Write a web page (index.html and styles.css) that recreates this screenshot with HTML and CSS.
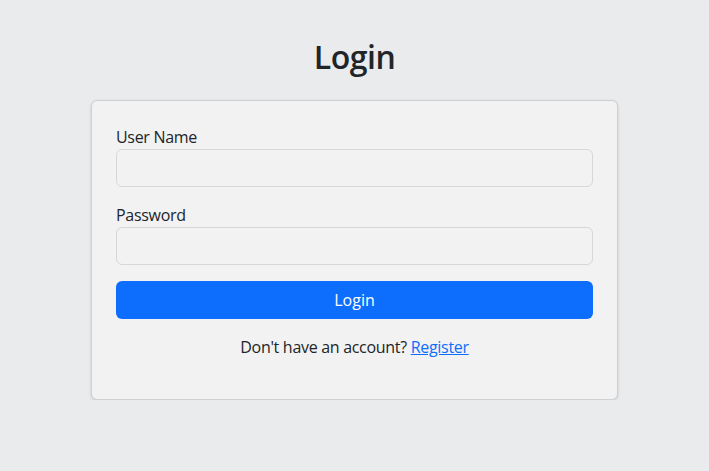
FILE: index.html
```html
<!DOCTYPE html>
<html lang="en">
<head>
<meta charset="utf-8">
<title>Login</title>
<link rel="stylesheet" href="styles.css">
</head>
<body>
<main class="page">
  <h2 class="title">Login</h2>
  <form class="card">
    <div class="field">
      <label class="label" for="user">User Name</label>
      <input class="input" id="user" type="text">
    </div>
    <div class="field">
      <label class="label" for="pass">Password</label>
      <input class="input" id="pass" type="password">
    </div>
    <button class="btn" type="button">Login</button>
    <p class="note">Don't have an account? <a href="#" class="link">Register</a></p>
  </form>
</main>
</body>
</html>
```
FILE: styles.css
```css
* { box-sizing: border-box; }
html, body { margin: 0; }
body {
  background: #eaebed;
  font-family: "Open Sans", "Noto Sans", "Liberation Sans", sans-serif;
  font-size: 16px;
  line-height: 1.5;
  letter-spacing: -0.3px;
  color: #212529;
}
.page {
  display: flex;
  flex-direction: column;
  align-items: center;
  padding-top: 38px;
}
.title {
  margin: 0 0 24px;
  font-size: 32px;
  font-weight: 600;
  line-height: 1.2;
  letter-spacing: -0.5px;
  color: #212529;
}
.card {
  width: 527px;
  background: #f2f2f2;
  border: 1px solid #cfd0d2;
  border-radius: 6px;
  box-shadow: 0 1px 3px rgba(0,0,0,0.14);
  padding: 24px;
  margin: 0;
}
.field { margin-bottom: 16px; display: flex; flex-direction: column; }
.label { margin-bottom: 0; display: block; height: 24px; }
.input {
  height: 38px;
  width: 100%;
  border: 1px solid #d6d7d9;
  border-radius: 6px;
  background: #f2f2f2;
  font: inherit;
  padding: 6px 12px;
}
.btn {
  display: block;
  width: 100%;
  height: 38px;
  border: 0;
  border-radius: 6px;
  background: #0d6efd;
  color: #fff;
  font: inherit;
  cursor: pointer;
}
.note {
  margin: 16px 0 16px;
  text-align: center;
}
.link { color: #0d6efd; text-decoration: underline; }
```
